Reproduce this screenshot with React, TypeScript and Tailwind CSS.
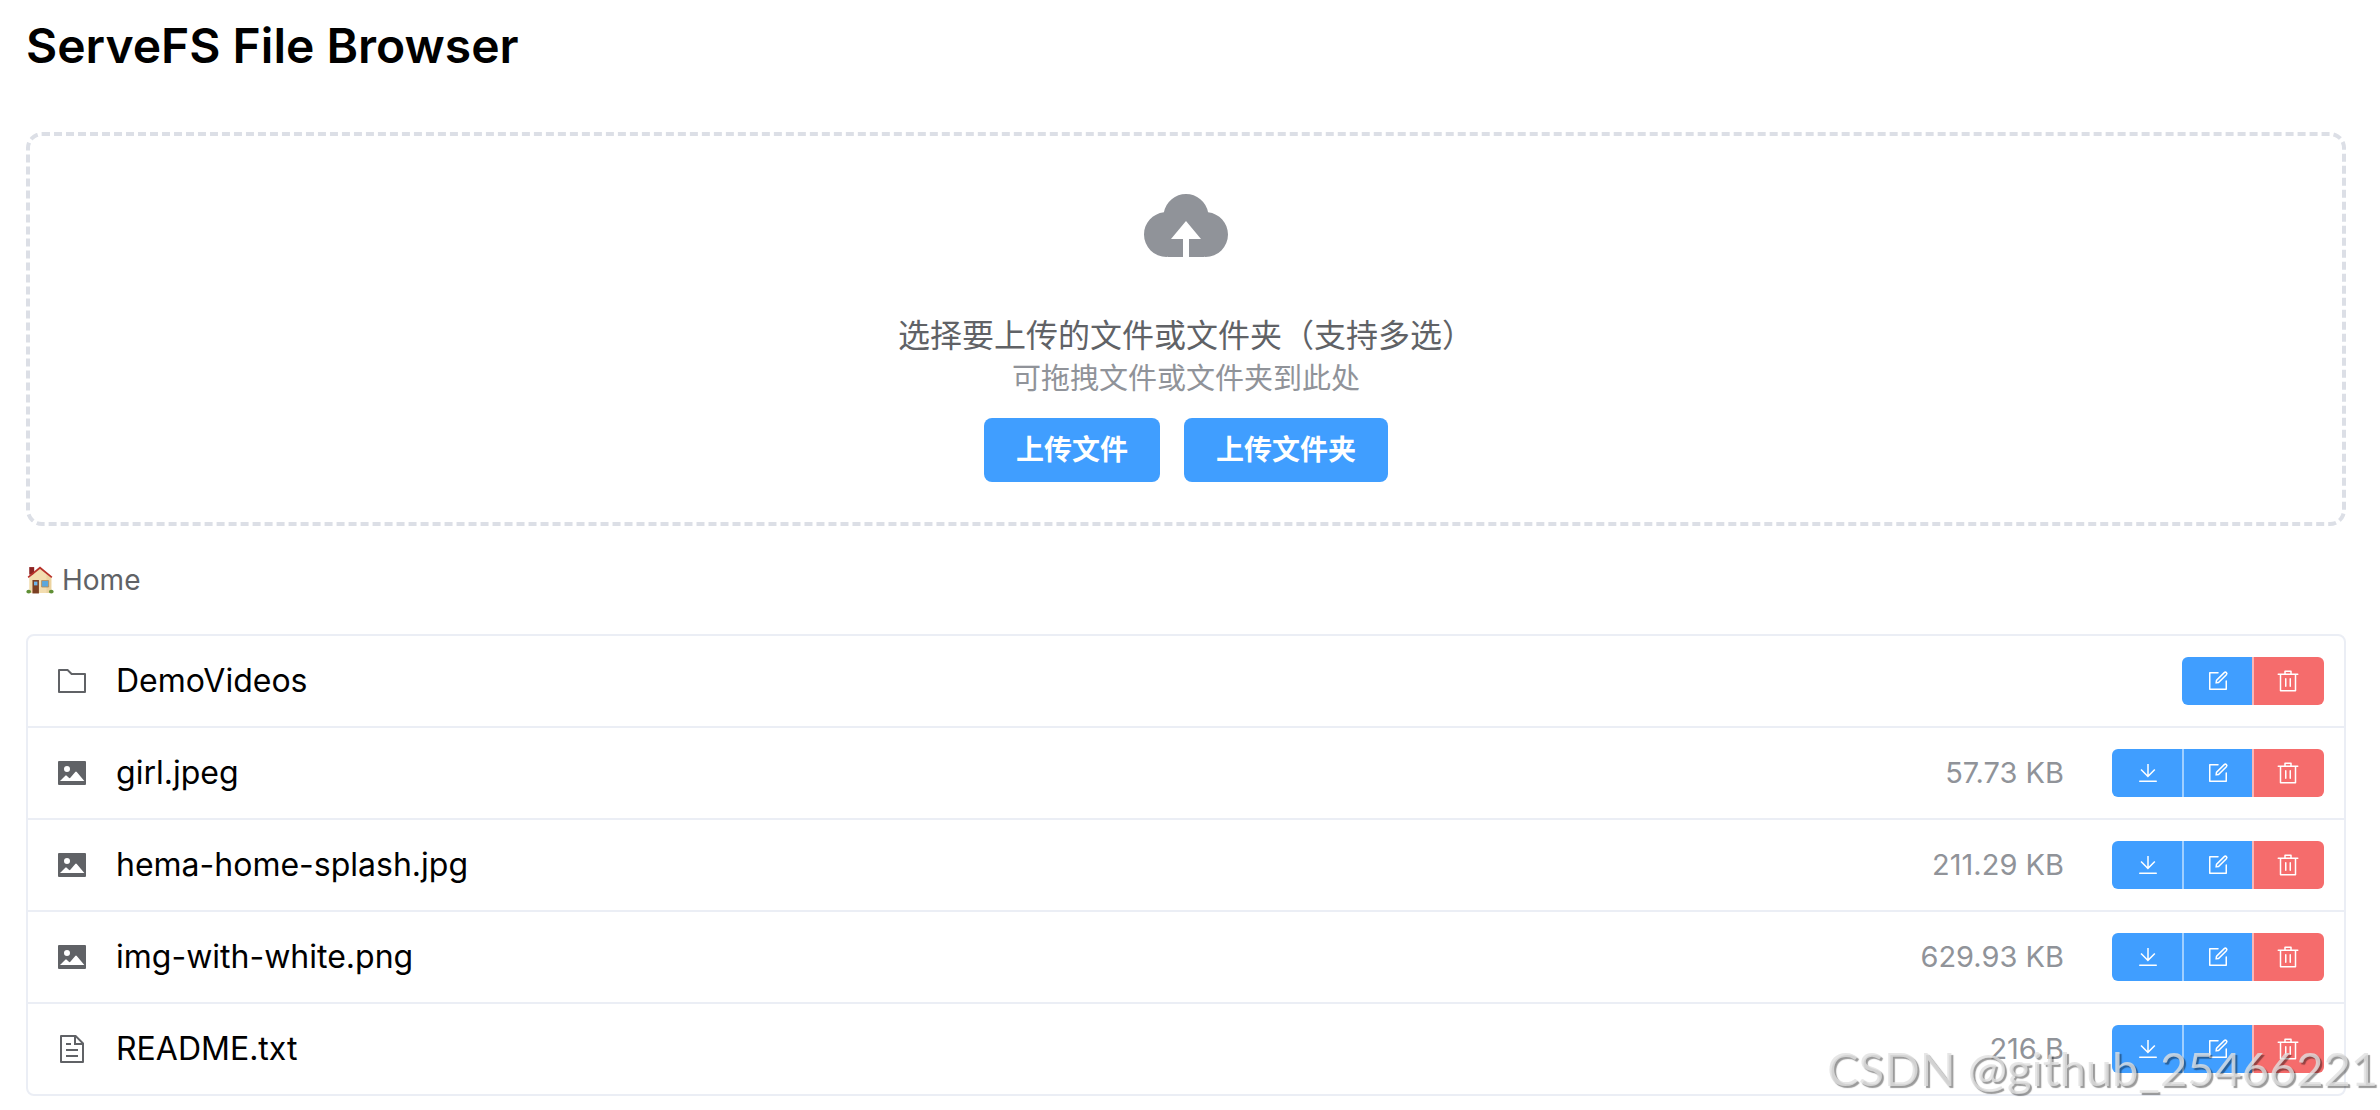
type FileKind = 'folder' | 'image' | 'document'

type Entry = {
  name: string
  kind: FileKind
  size?: string
}

const ENTRIES: Entry[] = [
  { name: 'DemoVideos', kind: 'folder' },
  { name: 'girl.jpeg', kind: 'image', size: '57.73 KB' },
  { name: 'hema-home-splash.jpg', kind: 'image', size: '211.29 KB' },
  { name: 'img-with-white.png', kind: 'image', size: '629.93 KB' },
  { name: 'README.txt', kind: 'document', size: '216 B' },
]

const ICONS = {
  upload:
    'M544 864V672h128L512 480 352 672h128v192H320v-1.6c-5.376.32-10.496 1.6-16 1.6A240 240 0 0 1 64 624c0-123.136 93.12-223.488 212.608-237.248A239.808 239.808 0 0 1 512 192a239.872 239.872 0 0 1 235.456 194.752c119.488 13.76 212.48 114.112 212.48 237.248a240 240 0 0 1-240 240c-5.376 0-10.56-1.28-16-1.6v1.6z',
  download:
    'M160 832h704a32 32 0 1 1 0 64H160a32 32 0 1 1 0-64m384-253.696 236.288-236.352 45.248 45.248L508.8 704 192 387.2l45.248-45.248L480 584.704V128h64z',
  edit: 'M832 512a32 32 0 1 1 64 0v352a32 32 0 0 1-32 32H160a32 32 0 0 1-32-32V160a32 32 0 0 1 32-32h352a32 32 0 0 1 0 64H192v640h640zM469.952 554.24l52.8-7.552L847.104 222.4a32 32 0 1 0-45.248-45.248L477.44 501.44l-7.552 52.8zm422.4-422.4a96 96 0 0 1 0 135.808l-331.84 331.84a32 32 0 0 1-18.112 9.088L436.8 623.68a32 32 0 0 1-36.224-36.224l15.104-105.6a32 32 0 0 1 9.024-18.112l331.904-331.84a96 96 0 0 1 135.744 0z',
  remove:
    'M160 256H96a32 32 0 0 1 0-64h256V95.936a32 32 0 0 1 32-32h256a32 32 0 0 1 32 32V192h256a32 32 0 1 1 0 64h-64v672a32 32 0 0 1-32 32H192a32 32 0 0 1-32-32zm448-64v-64H416v64zM224 896h576V256H224zm192-128a32 32 0 0 1-32-32V416a32 32 0 0 1 64 0v320a32 32 0 0 1-32 32m192 0a32 32 0 0 1-32-32V416a32 32 0 0 1 64 0v320a32 32 0 0 1-32 32',
  folder:
    'M128 192v640h768V320H485.76L357.504 192zm-32-64h287.872l128.384 128H928a32 32 0 0 1 32 32v576a32 32 0 0 1-32 32H96a32 32 0 0 1-32-32V160a32 32 0 0 1 32-32',
  image:
    'M96 896a32 32 0 0 1-32-32V160a32 32 0 0 1 32-32h832a32 32 0 0 1 32 32v704a32 32 0 0 1-32 32zm315.52-228.48-68.928-68.928a32 32 0 0 0-45.248 0L128 768.064h778.688l-242.112-290.56a32 32 0 0 0-49.216 0L458.752 665.408a32 32 0 0 1-47.232 2.112M256 384a96 96 0 1 0 192.064-.064A96 96 0 0 0 256 384',
  document:
    'M832 384H576V128H192v768h640zm-26.496-64L640 154.496V320zM160 64h480l256 256v608a32 32 0 0 1-32 32H160a32 32 0 0 1-32-32V96a32 32 0 0 1 32-32m160 448h384v64H320zm0-192h160v64H320zm0 384h384v64H320z',
}

function Icon({ name, className }: { name: keyof typeof ICONS; className: string }) {
  return (
    <svg viewBox="0 0 1024 1024" fill="currentColor" aria-hidden className={className}>
      <path d={ICONS[name]} />
    </svg>
  )
}

function HouseIcon() {
  return (
    <svg viewBox="0 0 26 26" aria-hidden className="size-7 shrink-0">
      <path d="M3 1h4.600v7H3z" fill="#8e2323" />
      <path d="M3 11 13 2l10.500 9v14H3z" fill="#f3ddb0" />
      <path d="M19 8l4.500 3v14H19z" fill="#ecd3a0" />
      <path d="M2 10.600 13 1.600l11 9" fill="none" stroke="#b8322a" strokeWidth="1.600" />
      <path d="M6 13h6v12.500H6z" fill="#7b3f22" />
      <path d="M7.400 14.500h3.200v3.500H7.400z" fill="#6db4e8" />
      <path d="M14.500 13.500h6.500v6h-6.500z" fill="#5ba7dd" stroke="#b98d55" strokeWidth="0.800" />
      <ellipse cx="2.500" cy="23.800" rx="2.200" ry="1.700" fill="#5f8f35" />
      <ellipse cx="23.500" cy="23.800" rx="2.200" ry="1.700" fill="#5f8f35" />
    </svg>
  )
}

function FileActions({ entry }: { entry: Entry }) {
  const button = 'flex h-12 w-[72px] items-center justify-center text-white'
  const joined = '-ml-0.5 border-l-2 border-white/50 pr-0.5'

  return (
    <div className="flex overflow-hidden rounded-md">
      {entry.kind !== 'folder' && (
        <button type="button" aria-label={`Download ${entry.name}`} className={`${button} bg-[#409eff]`}>
          <Icon name="download" className="size-6" />
        </button>
      )}
      <button
        type="button"
        aria-label={`Rename ${entry.name}`}
        className={`${button} bg-[#409eff] ${entry.kind !== 'folder' ? joined : ''}`}
      >
        <Icon name="edit" className="size-6" />
      </button>
      <button type="button" aria-label={`Delete ${entry.name}`} className={`${button} bg-[#f56c6c] ${joined}`}>
        <Icon name="remove" className="size-6" />
      </button>
    </div>
  )
}

function FileRow({ entry }: { entry: Entry }) {
  return (
    <li className="flex h-[92px] items-center border-b-2 border-[#ebeef5] pr-5 pl-7 last:border-b-0 last:h-[90px]">
      <Icon name={entry.kind} className="size-8 shrink-0 text-[#606266]" />
      <a href={`#${entry.name}`} className="ml-7 flex-1 truncate text-[32px] leading-10 text-black">
        {entry.name}
      </a>
      {entry.size && <span className="mr-12 text-[29px] leading-10 text-[#909399]">{entry.size}</span>}
      <FileActions entry={entry} />
    </li>
  )
}

export default function App() {
  return (
    <div className="min-h-screen overflow-hidden bg-white pr-[34px] pl-[26px] font-['Inter','Noto_Sans_CJK_SC',sans-serif]">
      <h1 className="pt-4 text-[48px] leading-[60px] font-semibold text-black">ServeFS File Browser</h1>

      <section className="mt-14 flex flex-col items-center rounded-2xl border-4 border-dashed border-[#dcdfe6] py-10">
        <Icon name="upload" className="size-24 text-[#909399]" />
        <p className="mt-[42px] text-[32px] leading-[44px] text-[#606266]">选择要上传的文件或文件夹（支持多选）</p>
        <p className="text-[29px] leading-[42px] text-[#909399]">可拖拽文件或文件夹到此处</p>
        <div className="mt-[18px] flex gap-6">
          <button type="button" className="h-16 rounded-lg bg-[#409eff] px-8 text-[28px] font-bold text-white">
            上传文件
          </button>
          <button type="button" className="h-16 rounded-lg bg-[#409eff] px-8 text-[28px] font-bold text-white">
            上传文件夹
          </button>
        </div>
      </section>

      <nav aria-label="Breadcrumb" className="mt-8 flex text-[28px] leading-[44px] text-[#606266]">
        <a href="#home" className="flex items-center gap-2">
          <HouseIcon />
          Home
        </a>
      </nav>

      <ul className="mt-8 rounded-lg border-2 border-[#ebeef5]">
        {ENTRIES.map((entry) => (
          <FileRow key={entry.name} entry={entry} />
        ))}
      </ul>

      <div className="pointer-events-none fixed right-0.5 bottom-3 font-['Lato',sans-serif] text-[47px] leading-[60px] text-[#e0e0e0]/80 [text-shadow:2px_2px_1px_#00000066]">
        CSDN @github_25466221
      </div>
    </div>
  )
}
